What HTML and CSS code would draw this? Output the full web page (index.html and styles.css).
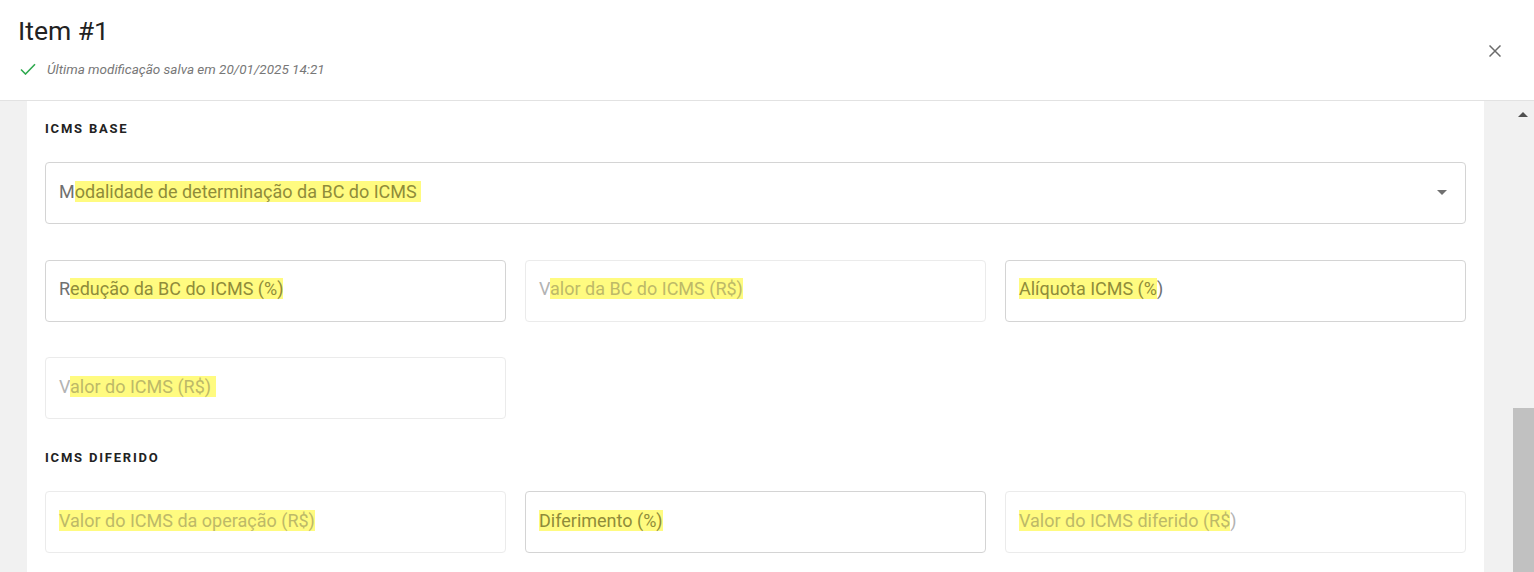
FILE: index.html
```html
<!DOCTYPE html>
<html lang="pt-BR">
<head>
    <meta charset="UTF-8">
    <meta name="viewport" content="width=device-width, initial-scale=1.0">
    <title>Item #1</title>
    <link rel="stylesheet" href="styles.css">
</head>
<body>
    <div class="dialog">
        <header class="dialog-header">
            <div class="header-text">
                <h1 class="title">Item #1</h1>
                <div class="saved">
                    <svg class="check-icon" width="16" height="12" viewBox="0 0 16 12">
                        <path d="M1 6.5 L5.5 11 L15 1.2" fill="none" stroke="#2fa94f" stroke-width="1.6"/>
                    </svg>
                    <span>Última modificação salva em 20/01/2025 14:21</span>
                </div>
            </div>
            <button class="close-btn" aria-label="Fechar">
                <svg width="12" height="12" viewBox="0 0 12 12">
                    <path d="M0.5 0.5 L11.5 11.5 M11.5 0.5 L0.5 11.5" stroke="#6b6b6b" stroke-width="1.5"/>
                </svg>
            </button>
        </header>

        <div class="dialog-body">
            <div class="gutter"></div>

            <div class="panel">
                <!-- ICMS base -->
                <div class="section-title">ICMS BASE</div>
                <div class="field-grid">
                    <div class="field field-full select">
                        <span class="label">M<mark>odalidade de determinação da BC do ICMS&nbsp;</mark></span>
                        <span class="caret"></span>
                    </div>

                    <div class="field">
                        <span class="label">R<mark>edução da BC do ICMS (%)</mark></span>
                    </div>
                    <div class="field disabled">
                        <span class="label">V<mark>alor da BC do ICMS (R$)</mark></span>
                    </div>
                    <div class="field">
                        <span class="label"><mark>Alíquota ICMS (%</mark>)</span>
                    </div>

                    <div class="field disabled">
                        <span class="label">V<mark>alor do ICMS (R$)&nbsp;</mark></span>
                    </div>
                </div>

                <!-- ICMS diferido -->
                <div class="section-title second">ICMS DIFERIDO</div>
                <div class="field-grid">
                    <div class="field disabled">
                        <span class="label"><mark>Valor do ICMS da operação (R$)</mark></span>
                    </div>
                    <div class="field">
                        <span class="label"><mark>Diferimento (%)</mark></span>
                    </div>
                    <div class="field disabled">
                        <span class="label"><mark>Valor do ICMS diferido (R$</mark>)</span>
                    </div>
                </div>
            </div>

            <div class="gutter"></div>

            <div class="scrollbar">
                <span class="scroll-arrow"></span>
                <div class="scroll-thumb"></div>
            </div>
        </div>
    </div>
</body>
</html>
```

FILE: styles.css
```css
* {
    margin: 0;
    padding: 0;
    box-sizing: border-box;
}

body {
    font-family: Roboto, 'Liberation Sans', sans-serif;
    background: #fff;
    color: #222;
    height: 572px;
    overflow: hidden;
}

.dialog {
    display: flex;
    flex-direction: column;
    height: 572px;
}

/* header */
.dialog-header {
    height: 101px;
    flex-shrink: 0;
    display: flex;
    justify-content: space-between;
    align-items: center;
    border-bottom: 1px solid #e2e2e2;
    padding: 0 33px 0 18px;
}

.header-text {
    align-self: flex-start;
    padding-top: 16px;
}

.title {
    font-size: 26.5px;
    font-weight: 400;
    line-height: 30px;
    color: #222;
}

.saved {
    display: flex;
    align-items: center;
    gap: 11px;
    margin-top: 14px;
    padding-left: 2px;
    height: 18px;
    font-size: 13.5px;
    font-style: italic;
    color: #777;
}

.close-btn {
    background: none;
    border: none;
    display: flex;
    padding: 0;
    margin-top: 2px;
    cursor: pointer;
}

/* body */
.dialog-body {
    flex: 1;
    display: grid;
    grid-template-columns: 27px 1457px 28px 22px;
    min-height: 0;
}

.gutter {
    background: #f1f1f1;
}

.panel {
    background: #fff;
    padding: 20px 18px 0;
}

.section-title {
    font-size: 13px;
    font-weight: 700;
    letter-spacing: 1.8px;
    line-height: 16px;
    color: #222;
    margin-bottom: 25px;
}

.section-title.second {
    margin-top: 31px;
}

.field-grid {
    display: grid;
    grid-template-columns: repeat(3, 1fr);
    column-gap: 19px;
    row-gap: 35.5px;
}

.field {
    height: 62px;
    border: 1px solid #d4d4d4;
    border-radius: 4px;
    display: flex;
    align-items: center;
    justify-content: space-between;
    padding: 0 18px 4px 13px;
    font-size: 18px;
    color: #707070;
}

.field-full {
    grid-column: 1 / -1;
}

.field.disabled {
    border-color: #ebebeb;
    color: #b3b3b3;
}

.label {
    line-height: 21px;
    white-space: nowrap;
}

mark {
    background: #fffb80;
    color: #8f8c3a;
}

.disabled mark {
    color: #bdb968;
}

.caret {
    width: 0;
    height: 0;
    border-left: 5px solid transparent;
    border-right: 5px solid transparent;
    border-top: 5px solid #707070;
    margin-top: 3px;
}

/* scrollbar */
.scrollbar {
    background: #f1f1f1;
    display: flex;
    flex-direction: column;
    align-items: center;
    padding-top: 11px;
}

.scroll-arrow {
    width: 0;
    height: 0;
    border-left: 5px solid transparent;
    border-right: 5px solid transparent;
    border-bottom: 5px solid #505050;
}

.scroll-thumb {
    align-self: stretch;
    margin: 291px 0 0 1px;
    flex: 1;
    background: #c1c1c1;
}
```
